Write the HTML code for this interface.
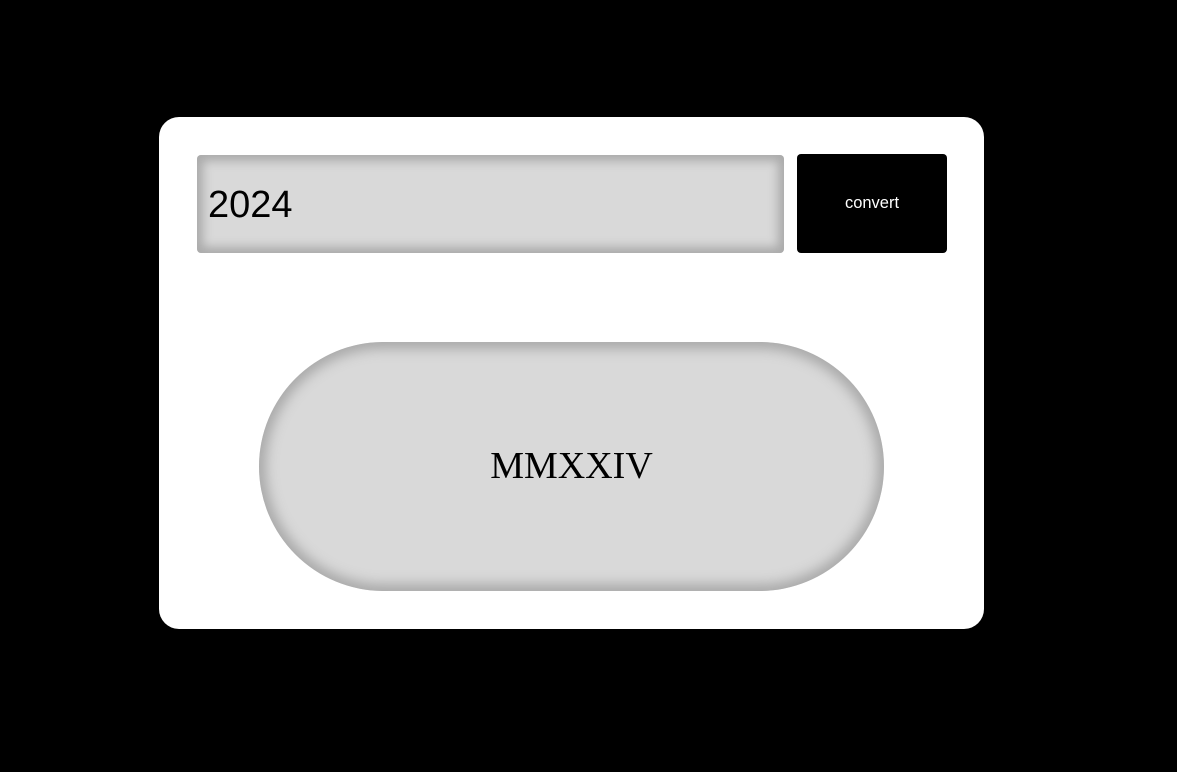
<!DOCTYPE html>
<html><head><style>
html,body{margin:0;padding:0;background:#000;width:1177px;height:772px;overflow:hidden}
.card{position:absolute;left:159px;top:117px;width:825px;height:512px;background:#fff;border-radius:20px}
.inp{position:absolute;left:197px;top:155px;width:587px;height:98px;background:#d9d9d9;border-radius:4px;box-shadow:inset 0 0 10px 6px #aaa;font:38px "Liberation Sans",sans-serif;color:#000;line-height:100px;padding-left:11px;box-sizing:border-box}
.btn{position:absolute;left:797px;top:154px;width:150px;height:99px;background:#000;border-radius:4px;color:#fff;font:16.5px "Liberation Sans",sans-serif;text-align:center;line-height:99px}
.pill{position:absolute;left:259px;top:342px;width:625px;height:249px;background:#d9d9d9;border-radius:125px;box-shadow:inset 0 0 12px 7px #aaa;font:38px "Liberation Serif",serif;text-align:center;line-height:249px;color:#000}
</style></head><body>
<div class="card"></div>
<div class="inp">2024</div>
<div class="btn">convert</div>
<div class="pill">MMXXIV</div>
</body></html>
